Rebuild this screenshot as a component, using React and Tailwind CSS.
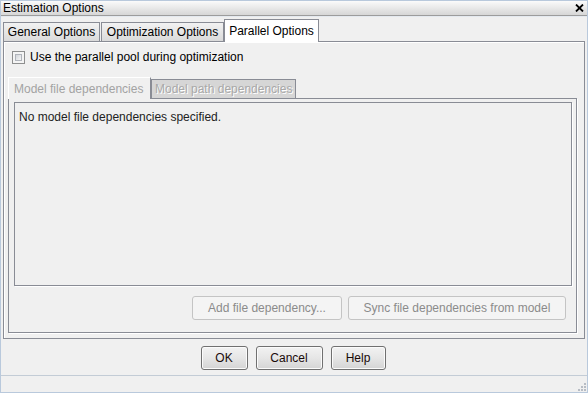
const FONT = { fontFamily: '"Liberation Sans", Arial, sans-serif' }

function Tab({ label, selected, w }) {
  if (selected) {
    return (
      <div className={`${w} h-[23px] -mb-px z-10 relative border border-b-0 border-[#898c95] bg-white flex items-center justify-center text-black`}>
        {label}
      </div>
    )
  }
  return (
    <div className={`${w} h-[19px] border border-b-0 border-[#898c95] bg-gradient-to-b from-[#f2f2f2] to-[#dadada] flex items-center justify-center text-black`}>
      {label}
    </div>
  )
}

function DisabledButton({ children, w }) {
  return (
    <div className={`${w} h-[24px] rounded-[3px] border border-[#c4c4c4] bg-[#f4f4f4] flex items-center justify-center text-[#8b8b8b]`}>
      {children}
    </div>
  )
}

function DialogButton({ children, w }) {
  return (
    <div className={`${w} h-[24px] rounded-[3px] border border-[#707070] bg-gradient-to-b from-[#f2f2f2] via-[#e6e6e6] to-[#d4d4d4] shadow-[inset_0_0_0_1px_#fbfbfb] flex items-center justify-center text-[#1a0a0a]`}>
      {children}
    </div>
  )
}

export default function App() {
  return (
    <div className="w-[588px] h-[393px] bg-[#f0f0f0] border border-[#b9c9dc] flex flex-col text-[12px] overflow-hidden" style={FONT}>
      {/* title bar */}
      <div className="h-[15px] shrink-0 bg-gradient-to-b from-[#fbfbfb] to-[#d6d6d6] border-b border-[#9c9c9c] flex items-center justify-between pl-[2px] pr-[3px] text-black">
        <span className="leading-none">Estimation Options</span>
        <svg width="9" height="8" viewBox="0 0 9 8">
          <path d="M1 0.5 L8 7.5 M8 0.5 L1 7.5" stroke="#000" strokeWidth="1.8" />
        </svg>
      </div>

      {/* outer tabs */}
      <div className="h-[25px] shrink-0 flex items-end pl-[2px] pt-[1px] border-t border-[#e4e9ef]">
        <Tab label="General Options" w="w-[97px]" />
        <Tab label="Optimization Options" w="w-[123px] ml-px" />
        <Tab label="Parallel Options" w="w-[95px]" selected />
      </div>

      {/* outer panel */}
      <div className="mx-[2px] h-[298px] shrink-0 border border-[#898c95] shadow-[inset_1px_1px_0_#ffffff] flex flex-col pl-[4px]">
        <div className="flex items-center gap-[5px] mt-[8px] ml-[4px] h-[14px]">
          <div className="w-[13px] h-[13px] border border-[#8e8f8f] bg-[#f4f4f4] p-[2px]">
            <div className="w-full h-full border border-[#b0b4bb] bg-gradient-to-br from-[#d2d5da] to-[#f6f6f6]" />
          </div>
          <span className="text-black">Use the parallel pool during optimization</span>
        </div>

        {/* inner tabs */}
        <div className="flex items-end mt-[12px] h-[22px]">
          <div className="h-[22px] w-[143px] -mb-px z-10 relative border border-b-0 border-[#898c95] border-l-white border-t-white bg-[#f0f0f0] flex items-center pl-[5px] text-[#a3a3a3]">
            Model file dependencies
          </div>
          <div className="h-[19px] w-[145px] border border-b-0 border-[#898c95] bg-[#d6d6d6] flex items-center pl-[3px] text-[#a8a8a8] [text-shadow:1px_1px_0_#ffffff]">
            Model path dependencies
          </div>
        </div>

        {/* inner panel */}
        <div className="w-[569px] h-[235px] border border-[#898c95] shadow-[1px_1px_0_#ffffff] flex flex-col pl-[5px] pr-[4px] pt-[3px]">
          <div className="h-[184px] border border-[#898c95] shadow-[1px_1px_0_#ffffff] px-[4px] pt-[5px] text-[#222]">
            No model file dependencies specified.
          </div>
          <div className="flex justify-end gap-[6px] mt-[10px] pr-[6px]">
            <DisabledButton w="w-[150px]">Add file dependency...</DisabledButton>
            <DisabledButton w="w-[218px]">Sync file dependencies from model</DisabledButton>
          </div>
        </div>
      </div>

      {/* dialog buttons */}
      <div className="h-[36px] shrink-0 flex justify-center gap-[8px] pt-[7px] pr-[2px]">
        <DialogButton w="w-[47px]">OK</DialogButton>
        <DialogButton w="w-[67px]">Cancel</DialogButton>
        <DialogButton w="w-[55px]">Help</DialogButton>
      </div>

      {/* status bar */}
      <div className="flex-1 border-t border-[#c3ccd6] flex items-end justify-end pr-[1px] pb-[1px]">
        <svg width="8" height="8" viewBox="0 0 8 8">
          <rect x="6" y="0" width="2" height="2" fill="#b7bcc4" />
          <rect x="3" y="3" width="2" height="2" fill="#b7bcc4" />
          <rect x="6" y="3" width="2" height="2" fill="#b7bcc4" />
          <rect x="0" y="6" width="2" height="2" fill="#b7bcc4" />
          <rect x="3" y="6" width="2" height="2" fill="#b7bcc4" />
          <rect x="6" y="6" width="2" height="2" fill="#b7bcc4" />
        </svg>
      </div>
    </div>
  )
}
